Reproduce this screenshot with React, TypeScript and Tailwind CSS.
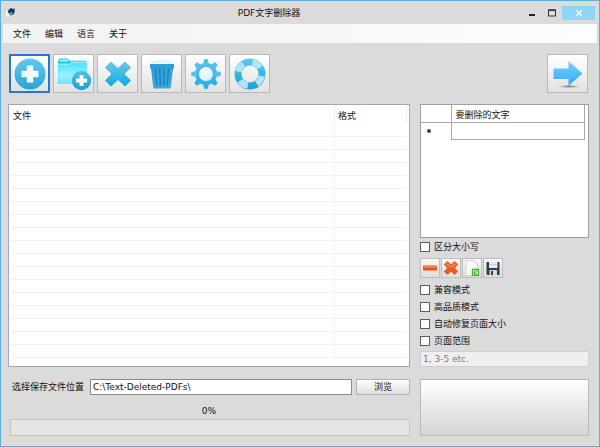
import React, { useState } from "react";
import clsx from "clsx";

const MENU_ITEMS = ["文件", "编辑", "语言", "关于"];

const PlusIcon = () => (
  <svg viewBox="0 0 32 32" className="w-8 h-8" aria-hidden="true">
    <defs>
      <linearGradient id="plus-fill" x1="0" y1="0" x2="0" y2="1">
        <stop offset="0" stopColor="#66c9ea" />
        <stop offset="1" stopColor="#25a4dc" />
      </linearGradient>
    </defs>
    <circle cx="16" cy="16" r="15.5" fill="url(#plus-fill)" />
    <path d="M12.8 7.5h6.4v5.3h5.3v6.4h-5.3v5.3h-6.4v-5.3H7.5v-6.4h5.3z" fill="#f4fbfe" />
  </svg>
);

const FolderAddIcon = () => (
  <svg viewBox="0 0 36 34" className="w-9 h-[34px]" aria-hidden="true">
    <defs>
      <linearGradient id="folder-fill" x1="0" y1="0" x2="0" y2="1">
        <stop offset="0" stopColor="#3fe3fb" />
        <stop offset="0.6" stopColor="#a0effc" />
        <stop offset="1" stopColor="#6fe6fa" />
      </linearGradient>
      <linearGradient id="folder-badge" x1="0" y1="0" x2="0" y2="1">
        <stop offset="0" stopColor="#4fc3ea" />
        <stop offset="1" stopColor="#179fd3" />
      </linearGradient>
    </defs>
    <path d="M2 4.5 3.5 1.5h8l1.8 2.2h17.2V26L2 27z" fill="#1fd2f3" />
    <path d="M4.5 2.8h6.4l1 1.5H4z" fill="#d8fafe" />
    <path d="M2 7.2h11.5l2-1.9h16L30 27H2.5z" fill="url(#folder-fill)" />
    <path d="M2 7.2h11.5l2-1.9h16" fill="none" stroke="#c5f7fd" strokeWidth="0.8" />
    <circle cx="25.5" cy="23.5" r="9.7" fill="url(#folder-badge)" />
    <path d="M23.6 18h3.8v3.6H31v3.8h-3.6V29h-3.8v-3.6H20v-3.8h3.6z" fill="#fff" />
  </svg>
);

const CrossIcon = () => (
  <svg viewBox="0 0 28 28" className="w-7 h-7" aria-hidden="true">
    <defs>
      <linearGradient id="cross-fill" x1="0" y1="0" x2="0" y2="1">
        <stop offset="0" stopColor="#6cc7e8" />
        <stop offset="1" stopColor="#0fabe8" />
      </linearGradient>
    </defs>
    <path
      d="M7 2 14 8.500 21 2l5.500 5.500L20 14l6.500 6.500L21 26l-7-6.500L7 26l-5.500-5.500L8 14 1.500 7.500z"
      fill="url(#cross-fill)"
      stroke="url(#cross-fill)"
      strokeLinejoin="round"
    />
  </svg>
);

const TrashIcon = () => (
  <svg viewBox="0 0 28 30" className="w-7 h-[30px]" aria-hidden="true">
    <defs>
      <linearGradient id="trash-fill" x1="0" y1="0" x2="0" y2="1">
        <stop offset="0" stopColor="#2c9fd6" />
        <stop offset="1" stopColor="#38a9dc" />
      </linearGradient>
    </defs>
    <path d="M9 .6h10l1 1.200H8z" fill="#e3f5fb" />
    <path d="M3 2h22l.8 2H2.200z" fill="#e2f3fa" />
    <path d="M2 5h24v4.500h-1L22.800 28q-.3 1.500-1.600 1.500H6.800Q5.500 29.500 5.200 28L3 9.500H2z" fill="url(#trash-fill)" />
    <path
      d="M7.500 10.500 8.800 26M11.800 10.500l.5 15.500M16.200 10.500l-.5 15.500M20.500 10.500 19.200 26"
      stroke="#1c7eb8"
      strokeWidth="1.300"
      strokeLinecap="round"
    />
  </svg>
);

const GEAR_TEETH = [0, 45, 90, 135, 180, 225, 270, 315];

const GearIcon = () => (
  <svg viewBox="0 0 30 30" className="w-[30px] h-[30px]" aria-hidden="true">
    <defs>
      <linearGradient id="gear-fill" gradientUnits="userSpaceOnUse" x1="0" y1="0" x2="0" y2="30">
        <stop offset="0" stopColor="#5fc2e8" />
        <stop offset="1" stopColor="#27b0e6" />
      </linearGradient>
      <linearGradient id="gear-hub" x1="0" y1="0" x2="1" y2="1">
        <stop offset="0" stopColor="#fdfeff" />
        <stop offset="1" stopColor="#d3ecf8" />
      </linearGradient>
    </defs>
    <g fill="url(#gear-fill)">
      <circle cx="15" cy="15" r="11" />
    </g>
    {GEAR_TEETH.map((angle) => (
      <path
        key={angle}
        d="M13 .5q2-.8 4 0l1 5.500h-6z"
        fill={angle > 90 && angle < 270 ? "#2cb2e6" : "#55bfe8"}
        transform={`rotate(${angle} 15 15)`}
      />
    ))}
    <circle cx="15" cy="15" r="7" fill="url(#gear-hub)" />
  </svg>
);

const LifebuoyIcon = () => (
  <svg viewBox="0 0 32 32" className="w-8 h-8" aria-hidden="true">
    <defs>
      <linearGradient id="buoy-fill" gradientUnits="userSpaceOnUse" x1="0" y1="0" x2="0" y2="32">
        <stop offset="0" stopColor="#5cc9ec" />
        <stop offset="1" stopColor="#13a3df" />
      </linearGradient>
    </defs>
    <circle cx="16" cy="16" r="12" fill="none" stroke="url(#buoy-fill)" strokeWidth="7" />
    <circle
      cx="16"
      cy="16"
      r="12"
      fill="none"
      stroke="#b5e4f8"
      strokeWidth="6.200"
      strokeDasharray="9.425 9.425"
      transform="rotate(10 16 16)"
    />
  </svg>
);

const ArrowIcon = () => (
  <svg viewBox="0 0 32 32" className="w-8 h-8" aria-hidden="true">
    <defs>
      <linearGradient id="arrow-fill" x1="0" y1="0" x2="0" y2="1">
        <stop offset="0" stopColor="#7fd0fb" />
        <stop offset="0.500" stopColor="#53bdfc" />
        <stop offset="1" stopColor="#38a5f5" />
      </linearGradient>
      <radialGradient id="arrow-shadow">
        <stop offset="0" stopColor="#777" />
        <stop offset="1" stopColor="#999" stopOpacity="0" />
      </radialGradient>
    </defs>
    <ellipse cx="17" cy="28.500" rx="12" ry="1.800" fill="url(#arrow-shadow)" />
    <path d="M1.500 10.500H16.500V3L30.500 15.500 16.500 28V21H1.500z" fill="url(#arrow-fill)" />
  </svg>
);

const AppLogo = () => (
  <svg viewBox="0 0 12 12" className="w-3 h-3" aria-hidden="true">
    <path d="M1 2.500h6v8H1z" fill="#f3f3f3" stroke="#b5b5b5" strokeWidth="0.600" />
    <path d="m3.500 4.500 3-3.500 4.500 1.500-1 4.500L6.500 8.500z" fill="#1d3550" />
    <path d="m5 6.500 2.500-2L9 7 6.500 9z" fill="#4aa0d0" />
    <path d="m9 1 2 .5-.5 1.500z" fill="#5e88a8" />
  </svg>
);

const RemoveRowIcon = () => (
  <svg viewBox="0 0 16 16" className="w-4 h-4" aria-hidden="true">
    <rect x="1" y="5.500" width="14" height="5" rx="0.500" fill="#e8531c" />
    <path d="M1.500 6h13v1.800h-13z" fill="#f58350" />
  </svg>
);

const ClearRowsIcon = () => (
  <svg viewBox="0 0 16 16" className="w-4 h-4" aria-hidden="true">
    <path
      d="M4.500 1.500 8 4.800l3.500-3.300 3.300 3L11.500 8l3.300 3.500-3.300 3L8 11.200l-3.500 3.300-3.300-3L4.500 8 1.200 4.500z"
      fill="#ea5a20"
      stroke="#cf440f"
      strokeWidth="0.600"
    />
    <path d="M4.500 2.800 8 6l3.500-3.200 1.700 1.700L10 7.500H6L2.800 4.500z" fill="#f5804c" />
  </svg>
);

const ImportIcon = () => (
  <svg viewBox="0 0 16 16" className="w-4 h-4" aria-hidden="true">
    <path d="M2 .5h8.500l3 3v12H2z" fill="#fafafa" stroke="#c9c9c9" strokeWidth="0.700" />
    <path d="M10.500 .5v3h3z" fill="#dedede" />
    <path d="M8.500 9.500h6v6h-6z" fill="#dff5d8" stroke="#43ac36" strokeWidth="1.300" />
    <path d="M10 13.500 13 10.500M10.500 11.500v2.500H13" fill="none" stroke="#3aa32d" />
  </svg>
);

const SaveIcon = () => (
  <svg viewBox="0 0 16 16" className="w-4 h-4" aria-hidden="true">
    <path d="M1.500 2h13v13H2.500l-1-1z" fill="#303c4c" />
    <path d="M4 1.500h8.500V8H4z" fill="#e4edf4" />
    <path d="M4 4.500h8.500" stroke="#b9c7d2" strokeWidth="0.800" />
    <path d="M4.500 10h7.500v5H4.500z" fill="#d6dde2" />
    <path d="M6 11h2v4H6z" fill="#303c4c" />
  </svg>
);

const TOOLS = [
  { label: "添加文件", icon: <PlusIcon /> },
  { label: "添加文件夹", icon: <FolderAddIcon /> },
  { label: "移除", icon: <CrossIcon /> },
  { label: "清空", icon: <TrashIcon /> },
  { label: "设置", icon: <GearIcon /> },
  { label: "帮助", icon: <LifebuoyIcon /> },
];

const ROW_TOOLS = [
  { label: "删除行", icon: <RemoveRowIcon /> },
  { label: "清空行", icon: <ClearRowsIcon /> },
  { label: "导入", icon: <ImportIcon /> },
  { label: "保存", icon: <SaveIcon /> },
];

interface ToolButtonProps {
  label: string;
  active?: boolean;
  children: React.ReactNode;
}

const ToolButton: React.FC<ToolButtonProps> = ({ label, active, children }) => (
  <button
    type="button"
    aria-label={label}
    className={clsx(
      "w-[41px] h-[39px] flex items-center justify-center bg-linear-to-b from-white to-[#e2e2e2]",
      active ? "border-2 border-[#2478cf]" : "border border-[#b9b9b9]"
    )}
  >
    {children}
  </button>
);

interface OptionProps {
  label: string;
  checked: boolean;
  onChange: () => void;
}

const Option: React.FC<OptionProps> = ({ label, checked, onChange }) => (
  <label className="flex items-center gap-1 h-[17px]">
    <input
      type="checkbox"
      checked={checked}
      onChange={onChange}
      className="appearance-none w-[10px] h-[10px] border border-[#5c5c5c] bg-white checked:bg-[#2478cf]"
    />
    {label}
  </label>
);

const PAGE_OPTIONS = ["兼容模式", "高品质模式", "自动修复页面大小", "页面范围"];

export default function App() {
  const [checked, setChecked] = useState<string[]>([]);
  const [outputPath, setOutputPath] = useState("C:\\Text-Deleted-PDFs\\");

  const toggle = (name: string) => {
    setChecked((prev) => (prev.includes(name) ? prev.filter((n) => n !== name) : [...prev, name]));
  };

  return (
    <div className="min-h-screen flex flex-col border border-[#5aaee0] bg-[#dbdbdb] text-[9px] leading-3 text-[#111] font-['DejaVu_Sans','Noto_Sans_CJK_SC',sans-serif]">
      {/* Title bar */}
      <header className="flex items-center h-[23px] pl-[3px] pr-1">
        <AppLogo />
        <h1 className="flex-1 text-center">PDF文字删除器</h1>
        <div className="flex items-center">
          <button type="button" aria-label="最小化" className="w-5 h-[14px] flex items-center justify-center">
            <svg viewBox="0 0 8 8" className="w-2 h-2" aria-hidden="true">
              <path d="M1 5h6v2H1z" fill="#222" />
            </svg>
          </button>
          <button type="button" aria-label="最大化" className="w-5 h-[14px] flex items-center justify-center">
            <svg viewBox="0 0 8 8" className="w-2 h-2" aria-hidden="true">
              <path d="M.5 1h7v6h-7z" fill="none" stroke="#333" />
              <path d="M0 .5h8v1.500H0z" fill="#333" />
            </svg>
          </button>
          <button type="button" aria-label="关闭" className="w-[33px] h-[14px] flex items-center justify-center bg-[#8fd6f5]">
            <svg viewBox="0 0 8 8" className="w-2 h-2" aria-hidden="true">
              <path d="m1.500 1.500 5 5m0-5-5 5" stroke="#fff" strokeWidth="1.400" />
            </svg>
          </button>
        </div>
      </header>

      <nav className="flex items-center gap-[14px] h-[19px] mx-[2px] px-[10px] bg-linear-to-r from-[#f2f2f2] to-[#fdfdfd]">
        {MENU_ITEMS.map((item) => (
          <button key={item} type="button">
            {item}
          </button>
        ))}
      </nav>

      {/* Toolbar */}
      <div className="flex justify-between pt-[11px] pl-2 pr-[11px]">
        <div className="flex gap-[3px]">
          {TOOLS.map((tool, index) => (
            <ToolButton key={tool.label} label={tool.label} active={index === 0}>
              {tool.icon}
            </ToolButton>
          ))}
        </div>
        <ToolButton label="开始">
          <ArrowIcon />
        </ToolButton>
      </div>

      <main className="flex-1 flex gap-[10px] pt-[11px] pl-[7px] pr-[10px] pb-[10px]">
        <section className="flex-1 flex flex-col">
          <div className="h-[263px] border border-[#a5a7ad] bg-white px-[2px] overflow-hidden">
            <table className="w-full table-fixed border-collapse">
              <colgroup>
                <col />
                <col className="w-[72px]" />
              </colgroup>
              <thead>
                <tr className="h-[18px]">
                  <th className="text-left font-normal pl-[2px] pt-1">文件</th>
                  <th className="text-left font-normal pl-[3px] pt-1 border-x border-[#ececec]">格式</th>
                </tr>
              </thead>
              <tbody>
                {Array.from({ length: 18 }, (_, i) => (
                  <tr key={i} className="h-[13px] border-b border-[#f1f1f1]">
                    <td></td>
                    <td className="border-l border-[#f1f1f1]"></td>
                  </tr>
                ))}
              </tbody>
            </table>
          </div>

          <div className="flex items-center mt-3 h-4">
            <label htmlFor="output-path" className="w-[82px] pl-1 whitespace-nowrap">
              选择保存文件位置
            </label>
            <input
              id="output-path"
              type="text"
              value={outputPath}
              onChange={(e) => setOutputPath(e.target.value)}
              className="flex-1 min-w-0 h-4 px-[2px] border border-[#8a8a8a] bg-white"
            />
            <button
              type="button"
              className="w-[54px] h-4 ml-1 border border-[#b4b4b4] bg-linear-to-b from-white to-[#dedede]"
            >
              浏览
            </button>
          </div>

          <div className="text-center mt-[10px]">0%</div>
          <div
            role="progressbar"
            aria-label="进度"
            aria-valuenow={0}
            aria-valuemin={0}
            aria-valuemax={100}
            className="h-[17px] mt-[2px] ml-[2px] border border-[#c3c3c3] bg-[#e5e5e5]"
          />
        </section>

        <aside className="w-[169px] flex flex-col">
          <div className="h-[134px] border border-[#a0a0a0] bg-white pr-[3px]">
            <table className="w-full table-fixed border-collapse">
              <colgroup>
                <col className="w-[30px]" />
                <col />
              </colgroup>
              <thead>
                <tr className="h-[17px]">
                  <th aria-label="行" className="border-r border-b border-[#a9a9a9]"></th>
                  <th className="text-left font-normal pl-1 pt-1 border-b border-r border-[#a9a9a9]">要删除的文字</th>
                </tr>
              </thead>
              <tbody>
                <tr className="h-[17px]">
                  <td className="border-r border-[#a9a9a9]">
                    <div className="w-1 h-1 ml-[6px] rounded-full bg-[#444]" />
                  </td>
                  <td className="p-0 border-r border-b border-[#a9a9a9]">
                    <input type="text" aria-label="要删除的文字" className="block w-full h-4 px-1" />
                  </td>
                </tr>
              </tbody>
            </table>
          </div>

          <Option label="区分大小写" checked={checked.includes("区分大小写")} onChange={() => toggle("区分大小写")} />

          <div className="flex gap-px mt-[3px] mb-[3px]">
            {ROW_TOOLS.map((tool) => (
              <button
                key={tool.label}
                type="button"
                aria-label={tool.label}
                className="w-5 h-5 flex items-center justify-center border border-[#bdbdbd] bg-linear-to-b from-[#f7f7f7] to-[#dedede]"
              >
                {tool.icon}
              </button>
            ))}
          </div>

          {PAGE_OPTIONS.map((name) => (
            <Option key={name} label={name} checked={checked.includes(name)} onChange={() => toggle(name)} />
          ))}

          <input
            type="text"
            aria-label="页面范围"
            placeholder="1, 3-5 etc."
            disabled={!checked.includes("页面范围")}
            className="w-full h-4 mt-[2px] px-[2px] border border-[#cfcfcf] bg-[#efefef] placeholder:text-[#7c7c7c]"
          />
          <button
            type="button"
            aria-label="预览"
            className="h-[57px] mt-3 border border-[#b9b9b9] bg-linear-to-b from-white to-[#d4d4d4]"
          />
        </aside>
      </main>
    </div>
  );
}
